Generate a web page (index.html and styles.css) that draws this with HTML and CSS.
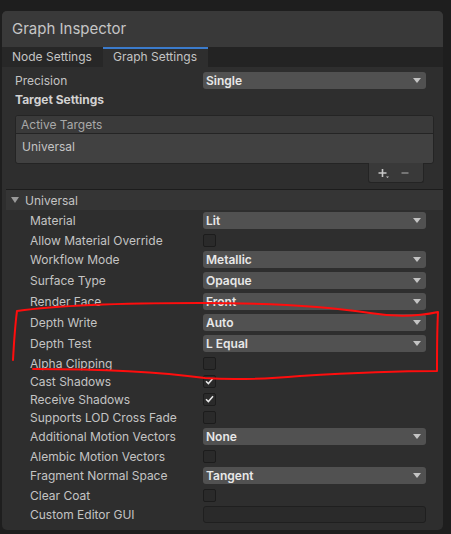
FILE: index.html
```html
<!DOCTYPE html>
<html lang="en">
<head>
    <meta charset="UTF-8">
    <title>Graph Inspector</title>
    <link rel="stylesheet" href="styles.css">
</head>
<body>
    <div class="inspector">
        <div class="inspector-header">Graph Inspector</div>

        <div class="tabs">
            <div class="tab tab-node">Node Settings</div>
            <div class="tab tab-graph active">Graph Settings</div>
        </div>

        <div class="settings">
            <div class="row wide">
                <span class="label">Precision</span>
                <div class="dropdown">Single</div>
            </div>
            <div class="section-title">Target Settings</div>

            <div class="target-list">
                <div class="list-header">Active Targets</div>
                <div class="list-body">Universal</div>
            </div>
            <div class="list-footer">
                <svg class="icon-plus" width="14" height="12" viewBox="0 0 14 12">
                    <path d="M4.5 2v8M0.5 6h8" stroke="#c8c8c8" stroke-width="1.6"/>
                    <path d="M8 9.5h3l-1.5 1.6z" fill="#c8c8c8"/>
                </svg>
                <svg class="icon-minus" width="8" height="12" viewBox="0 0 8 12">
                    <path d="M0.5 6h7" stroke="#8a8a8a" stroke-width="1.6"/>
                </svg>
            </div>
        </div>

        <div class="foldout">
            <span class="fold-arrow"></span>
            <span>Universal</span>
        </div>

        <div class="props">
            <div class="row"><span class="label">Material</span><div class="dropdown">Lit</div></div>
            <div class="row check-row"><span class="label">Allow Material Override</span><span class="checkbox"></span></div>
            <div class="row"><span class="label">Workflow Mode</span><div class="dropdown">Metallic</div></div>
            <div class="row"><span class="label">Surface Type</span><div class="dropdown">Opaque</div></div>
            <div class="row"><span class="label">Render Face</span><div class="dropdown">Front</div></div>
            <div class="row"><span class="label">Depth Write</span><div class="dropdown">Auto</div></div>
            <div class="row"><span class="label">Depth Test</span><div class="dropdown">L Equal</div></div>
            <div class="row check-row"><span class="label">Alpha Clipping</span><span class="checkbox"></span></div>
            <div class="row check-row"><span class="label">Cast Shadows</span><span class="checkbox checked"><svg width="9" height="8" viewBox="0 0 9 8"><path d="M1 4.2l2.4 2.4L8 1.2" fill="none" stroke="#e8e8e8" stroke-width="1.5"/></svg></span></div>
            <div class="row check-row"><span class="label">Receive Shadows</span><span class="checkbox checked"><svg width="9" height="8" viewBox="0 0 9 8"><path d="M1 4.2l2.4 2.4L8 1.2" fill="none" stroke="#e8e8e8" stroke-width="1.5"/></svg></span></div>
            <div class="row check-row"><span class="label">Supports LOD Cross Fade</span><span class="checkbox"></span></div>
            <div class="row"><span class="label">Additional Motion Vectors</span><div class="dropdown">None</div></div>
            <div class="row check-row"><span class="label">Alembic Motion Vectors</span><span class="checkbox"></span></div>
            <div class="row"><span class="label">Fragment Normal Space</span><div class="dropdown">Tangent</div></div>
            <div class="row check-row"><span class="label">Clear Coat</span><span class="checkbox"></span></div>
            <div class="row"><span class="label">Custom Editor GUI</span><div class="text-field"></div></div>
        </div>
    </div>

    <!-- red marker scribble drawn over the screenshot -->
    <svg class="annotation" width="451" height="534" viewBox="0 0 451 534">
        <path d="M13 360 C14 342 15 326 17 311 C60 305 120 303 200 303 C270 303 330 307 370 313 C395 317 420 316 438 312 C437 330 437 352 437 371 C405 371 350 373 300 376 C265 379 230 380 205 378 C160 372 100 369 33 369"
              fill="none" stroke="#ff0d0d" stroke-width="2" stroke-linecap="round" stroke-linejoin="round"/>
    </svg>
</body>
</html>
```

FILE: styles.css
```css
* {
    margin: 0;
    padding: 0;
    box-sizing: border-box;
}

body {
    font-family: Inter, "Noto Sans", sans-serif;
    font-size: 12px;
    color: #c4c4c4;
    background-color: #1e1e1e;
    padding: 11px 0 0 2px;
    height: 534px;
    overflow: hidden;
    position: relative;
}

.inspector {
    width: 441px;
    height: 519px;
    background-color: #2e2e2e;
    border-radius: 5px;
    overflow: hidden;
}

.inspector-header {
    height: 36px;
    line-height: 36px;
    padding-left: 10px;
    font-size: 15px;
    color: #c6c6c6;
    background-color: #393939;
}

.tabs {
    display: flex;
    height: 20px;
    background-color: #232323;
}

.tab {
    line-height: 20px;
    padding-left: 10px;
    color: #c4c4c4;
}

.tab-node {
    width: 101px;
    background-color: #272727;
}

.tab-graph {
    width: 105px;
}

.tab.active {
    background-color: #2e2e2e;
    box-shadow: inset 0 2px 0 #3b7bcc;
}

/* top block: precision + targets */
.settings {
    padding: 3px 9px 0 13px;
}

.row {
    display: flex;
    align-items: center;
    height: 21px;
}

.row.wide {
    margin-right: 8px;
}

.check-row {
    height: 18px;
}

.label {
    flex-shrink: 0;
    white-space: nowrap;
}

.settings .label {
    width: 188px;
}

.dropdown {
    flex: 1;
    display: flex;
    justify-content: space-between;
    align-items: center;
    height: 17px;
    padding: 0 5px 0 3px;
    background-color: #515151;
    border-radius: 3px;
    color: #e8e8e8;
    font-weight: 600;
}

.dropdown::after {
    content: "";
    border-left: 4px solid transparent;
    border-right: 4px solid transparent;
    border-top: 5px solid #c4c4c4;
}

.section-title {
    height: 18px;
    line-height: 18px;
    font-weight: 700;
    color: #d2d2d2;
}

.target-list {
    margin-top: 6px;
    border: 1px solid #242424;
    border-radius: 3px;
    background-color: #414141;
    overflow: hidden;
}

.list-header {
    height: 18px;
    line-height: 17px;
    padding-left: 5px;
    color: #a9a9a9;
    background-color: #3a3a3a;
    border-bottom: 1px solid #242424;
}

.list-body {
    height: 29px;
    line-height: 26px;
    padding-left: 6px;
    color: #c4c4c4;
}

.list-footer {
    display: flex;
    align-items: center;
    gap: 9px;
    width: 56px;
    height: 20px;
    margin: -1px 10px 0 auto;
    padding-left: 9px;
    background-color: #393939;
    border: 1px solid #242424;
    border-top: none;
    border-radius: 0 0 3px 3px;
}

.icon-plus,
.icon-minus {
    display: block;
}

/* universal foldout */
.foldout {
    display: flex;
    align-items: center;
    height: 21px;
    margin: 6px 0 0 4px;
    padding-left: 5px;
    border-top: 1px solid #1c1c1c;
    background-color: #353535;
    color: #c4c4c4;
}

.fold-arrow {
    width: 0;
    height: 0;
    margin-right: 6px;
    border-left: 4px solid transparent;
    border-right: 4px solid transparent;
    border-top: 6px solid #9a9a9a;
}

.props {
    padding: 0 17px 0 28px;
}

.props .label {
    width: 173px;
}

.checkbox {
    width: 13px;
    height: 13px;
    display: flex;
    align-items: center;
    justify-content: center;
    background-color: #2a2a2a;
    border: 1px solid #1c1c1c;
    border-radius: 2px;
}

.text-field {
    flex: 1;
    height: 17px;
    background-color: #2a2a2a;
    border: 1px solid #1f1f1f;
    border-radius: 3px;
}

.annotation {
    position: absolute;
    left: 0;
    top: 0;
    pointer-events: none;
}
```
